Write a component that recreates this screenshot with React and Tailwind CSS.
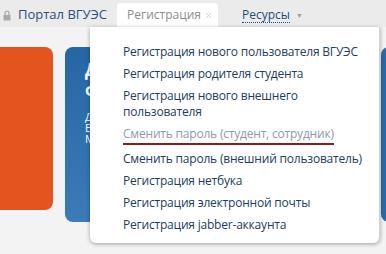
import { X } from "lucide-react";

const items = [
  { label: "Регистрация нового пользователя ВГУЭС" },
  { label: "Регистрация родителя студента" },
  { label: "Регистрация нового внешнего пользователя", wrap: true },
  { label: "Сменить пароль (студент, сотрудник)", active: true },
  { label: "Сменить пароль (внешний пользователь)" },
  { label: "Регистрация нетбука" },
  { label: "Регистрация электронной почты" },
  { label: "Регистрация jabber-аккаунта" },
];

const Lock = () => (
  <svg width="8" height="11" viewBox="0 0 8 11" className="shrink-0">
    <path d="M2 5V3.2a2 2 0 0 1 4 0V5" fill="none" stroke="#a9a9a9" strokeWidth="1.3" />
    <rect x="0.5" y="5" width="7" height="5.5" rx="0.5" fill="#a9a9a9" />
  </svg>
);

export default function App() {
  return (
    <div className="relative w-[386px] h-[254px] overflow-hidden bg-[#f3f3f3] font-['Open_Sans',sans-serif]">
      {/* top navigation */}
      <div className="flex items-end h-[27px] bg-[#ebebeb]">
        <div className="flex items-center gap-[7px] pl-[3px] h-[24px] w-[117px] text-[13px]">
          <Lock />
          <span className="text-[#2a4f7c]">Портал ВГУЭС</span>
        </div>
        <div className="flex items-center gap-[3px] h-[24px] w-[101px] pl-[10px] bg-white rounded-t-[3px] text-[12px] text-[#8c8c8c]">
          <span>Регистрация</span>
          <X size={9} strokeWidth={2} className="text-[#c4c4c4] mt-[1px]" />
        </div>
        <div className="flex items-center gap-[6px] h-[24px] pl-[24px] text-[12px] text-[#1f4b7d]">
          <span className="border-b border-dotted border-[#1f4b7d] leading-[15px]">Ресурсы</span>
          <span className="text-[7px] text-[#a0a0a0] mt-[2px]">▼</span>
        </div>
      </div>

      {/* tiles */}
      <div className="flex gap-[12px] pt-[20px] ml-[-251px]">
        <div className="shrink-0 w-[304px] h-[163px] rounded-[8px] bg-[#e4541f]" />
        <div className="shrink-0 w-[304px] h-[175px] rounded-[8px] bg-gradient-to-b from-[#2766a4] to-[#3a7bb8] px-[20px] pt-[12px] text-white">
          <p className="w-[14px] text-[17px] font-bold leading-[22px]">Д Ф</p>
          <p className="mt-[8px] w-[10px] text-[11px] leading-[11px]">Д Е М</p>
        </div>
        <div className="shrink-0 w-[304px] h-[175px] rounded-[8px] bg-[#2a69a6]" />
      </div>

      {/* dropdown menu */}
      <div className="absolute left-[90px] top-[27px] w-[290px] h-[216px] bg-white rounded-b-[6px] border-r border-[#d0d0d0] shadow-[0_1px_4px_rgba(0,0,0,0.35)] pl-[33px] pt-[17px]">
        <ul className="flex flex-col items-start gap-[6px] text-[12px] leading-[16px] tracking-[-0.2px]">
          {items.map((it) => (
            <li
              key={it.label}
              className={
                it.active
                  ? "text-[#8d9aa8] border-b-2 border-[#8a1c1c] pb-[1px]"
                  : it.wrap
                  ? "text-[#213d5c] w-[210px]"
                  : "text-[#213d5c]"
              }
            >
              {it.label}
            </li>
          ))}
        </ul>
      </div>
    </div>
  );
}
